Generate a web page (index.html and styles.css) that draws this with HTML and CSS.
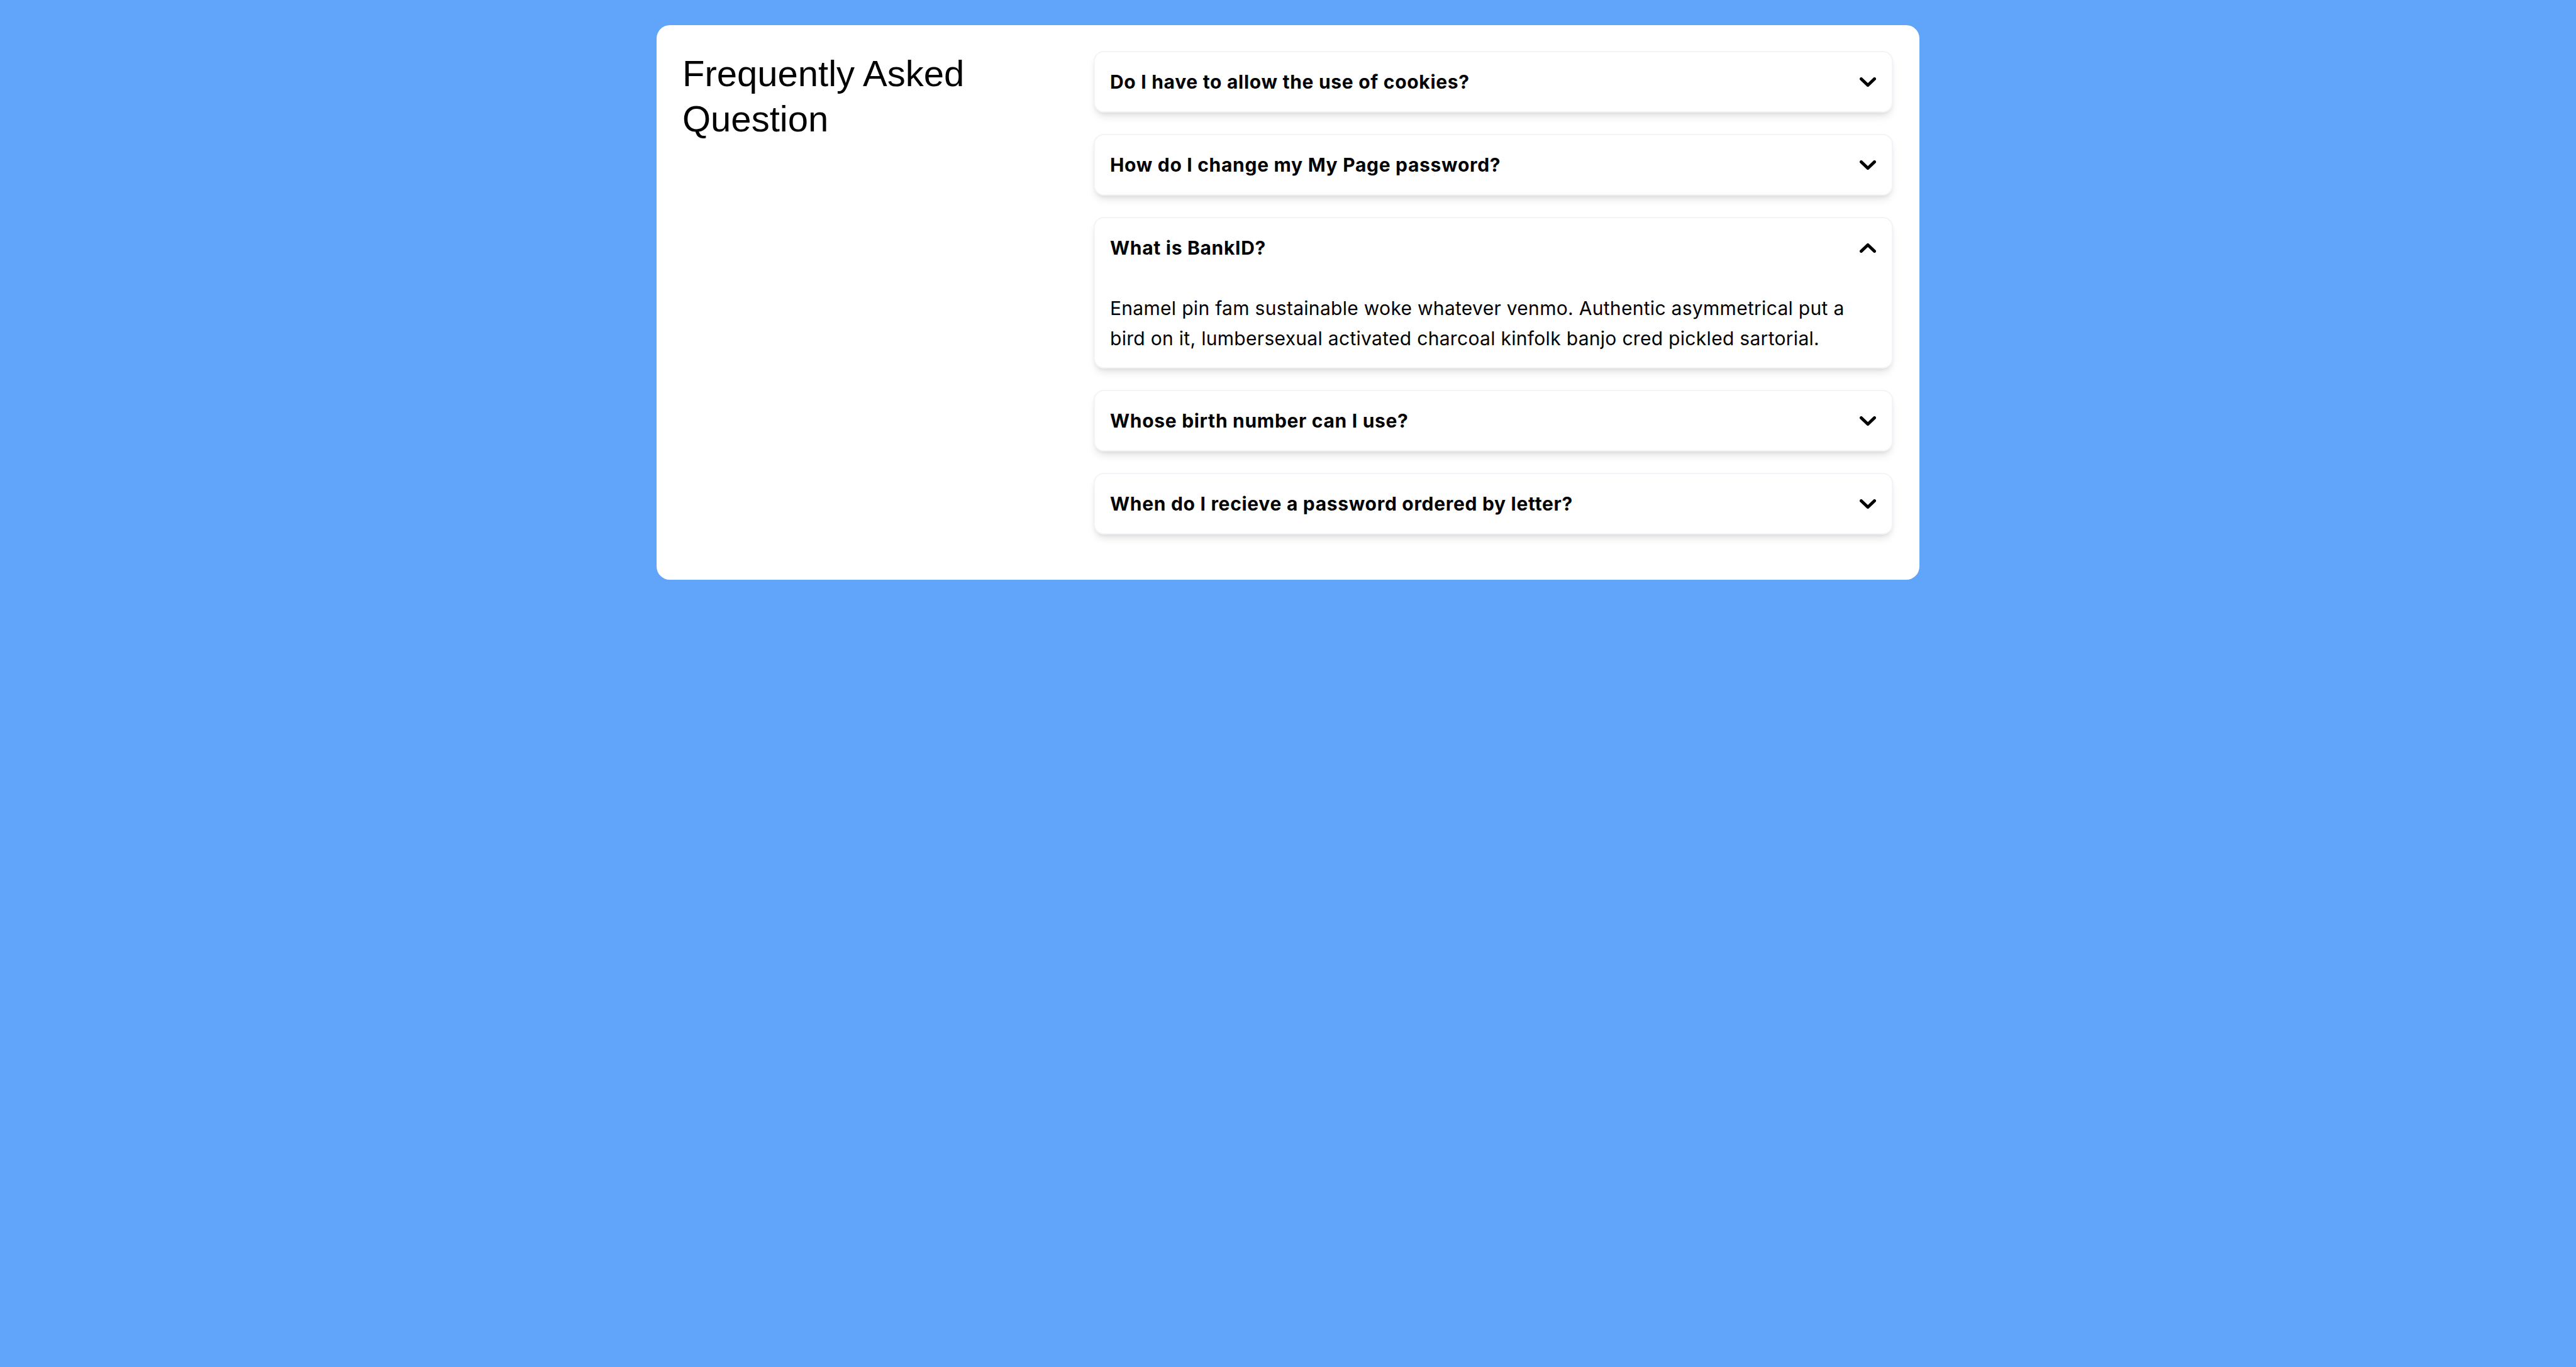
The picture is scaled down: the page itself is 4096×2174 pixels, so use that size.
FILE: index.html
```html
<!DOCTYPE html>
<html lang="en">
<head>
<meta charset="utf-8">
<title>FAQ</title>
<link rel="stylesheet" href="styles.css">
</head>
<body>
<main class="card">
  <section class="intro">
    <h1 class="title">Frequently Asked Question</h1>
  </section>
  <section class="faq">
    <div class="item">
      <div class="question">
        <span>Do I have to allow the use of cookies?</span>
        <svg class="chev" width="26" height="15" viewBox="0 0 26 15"><polyline points="2.5,2.5 13,12.5 23.5,2.5" fill="none" stroke="#000" stroke-width="5" stroke-linecap="round" stroke-linejoin="round"/></svg>
      </div>
    </div>
    <div class="item">
      <div class="question">
        <span>How do I change my My Page password?</span>
        <svg class="chev" width="26" height="15" viewBox="0 0 26 15"><polyline points="2.5,2.5 13,12.5 23.5,2.5" fill="none" stroke="#000" stroke-width="5" stroke-linecap="round" stroke-linejoin="round"/></svg>
      </div>
    </div>
    <div class="item">
      <div class="question">
        <span>What is BankID?</span>
        <svg class="chev" width="26" height="15" viewBox="0 0 26 15"><polyline points="2.5,12.5 13,2.5 23.5,12.5" fill="none" stroke="#000" stroke-width="5" stroke-linecap="round" stroke-linejoin="round"/></svg>
      </div>
      <p class="answer">Enamel pin fam sustainable woke whatever venmo. Authentic asymmetrical put a bird on it, lumbersexual activated charcoal kinfolk banjo cred pickled sartorial.</p>
    </div>
    <div class="item">
      <div class="question">
        <span>Whose birth number can I use?</span>
        <svg class="chev" width="26" height="15" viewBox="0 0 26 15"><polyline points="2.5,2.5 13,12.5 23.5,2.5" fill="none" stroke="#000" stroke-width="5" stroke-linecap="round" stroke-linejoin="round"/></svg>
      </div>
    </div>
    <div class="item">
      <div class="question">
        <span>When do I recieve a password ordered by letter?</span>
        <svg class="chev" width="26" height="15" viewBox="0 0 26 15"><polyline points="2.5,2.5 13,12.5 23.5,2.5" fill="none" stroke="#000" stroke-width="5" stroke-linecap="round" stroke-linejoin="round"/></svg>
      </div>
    </div>
  </section>
</main>
</body>
</html>
```

FILE: styles.css
```css
html, body {
  margin: 0;
  padding: 0;
}
body {
  background: #60a5fa;
  min-height: 2174px;
  padding-top: 40px;
  box-sizing: border-box;
}
.card {
  width: 2008px;
  margin: 0 auto;
  box-sizing: border-box;
  background: #ffffff;
  border-radius: 21px;
  padding: 41px 42px 72px 41px;
  display: flex;
}
.intro {
  flex: 1;
}
.title {
  margin: 0;
  font-family: "Liberation Sans", Arial, sans-serif;
  font-weight: 400;
  font-size: 58px;
  line-height: 72px;
  color: #000;
  width: 600px;
}
.faq {
  width: 1271px;
  display: flex;
  flex-direction: column;
  gap: 34px;
}
.item {
  background: #fff;
  border: 2px solid #f1f4f8;
  border-radius: 16px;
  box-shadow: 0 9px 14px -4px rgba(0, 0, 0, 0.12), 0 3px 6px -2px rgba(0, 0, 0, 0.07);
  font-family: Inter, "Noto Sans", sans-serif;
  color: #000;
}
.question {
  display: flex;
  align-items: center;
  justify-content: space-between;
  padding: 23px 25px 23px 24px;
  font-size: 30px;
  line-height: 48px;
  font-weight: 700;
  letter-spacing: 0.7px;
}
.chev {
  display: block;
  flex: none;
}
.answer {
  margin: 0;
  padding: 25px 24px 22px 24px;
  font-size: 30px;
  line-height: 48px;
  font-weight: 400;
  letter-spacing: 0.3px;
}
```
